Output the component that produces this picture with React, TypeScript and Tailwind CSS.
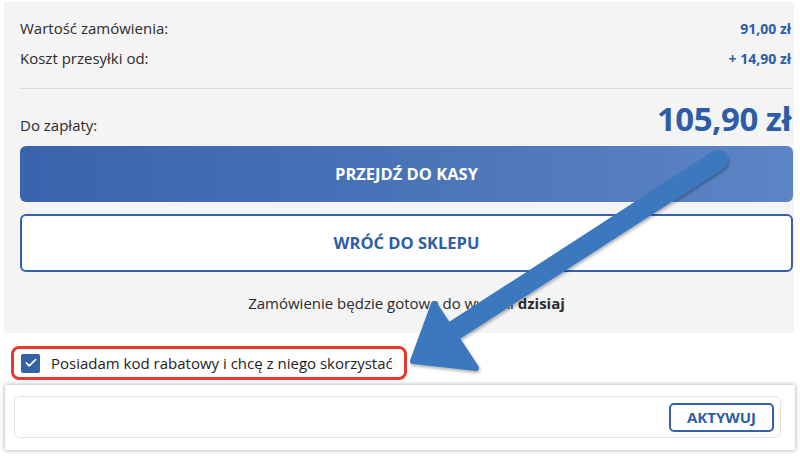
import { Check } from "lucide-react";

export default function App() {
  return (
    <div className="relative w-[800px] h-[457px] overflow-hidden bg-white font-['Open_Sans',sans-serif] text-[#2b2b2b]">
      <div className="ml-1 mr-[6px] mt-0.5 bg-[#f4f4f4] pl-4 pr-px pt-4 pb-5">
        <div className="flex h-5 items-center justify-between text-[15px]">
          <span>Wartość zamówienia:</span>
          <span className="pr-0.5 text-[14px] font-bold text-[#2f5da6]">91,00 zł</span>
        </div>
        <div className="mt-2.5 flex h-5 items-center justify-between text-[15px]">
          <span>Koszt przesyłki od:</span>
          <span className="pr-0.5 text-[14px] font-bold text-[#2f5da6]">+ 14,90 zł</span>
        </div>
        <div className="mt-5 border-t border-[#dcdcdc]" />
        <div className="mt-[10px] flex h-10 items-baseline justify-between">
          <span className="text-[15px]">Do zapłaty:</span>
          <span className="pr-0.5 text-[33px] leading-10 font-bold tracking-[-0.5px] text-[#2e5ca6]">105,90 zł</span>
        </div>
        <div className="mt-[7px] flex h-14 items-center justify-center rounded-md bg-gradient-to-r from-[#3963ac] to-[#5b85c4] text-[16.5px] font-bold text-white">
          PRZEJDŹ DO KASY
        </div>
        <div className="mt-3 flex h-[58px] items-center justify-center rounded-md border-2 border-[#3661ad] bg-white text-[16.5px] font-bold text-[#2f5da6]">
          WRÓĆ DO SKLEPU
        </div>
        <div className="mt-[21px] h-5 text-center text-[15px] leading-5">
          Zamówienie będzie gotowe do wysyłki <b>dzisiaj</b>
        </div>
      </div>

      <div className="ml-[11px] mt-[13px] flex h-[34px] w-[396px] items-center gap-[11px] rounded-lg border-[3px] border-[#e53a32] pl-[7px]">
        <span className="flex h-[19px] w-[19px] items-center justify-center rounded-[2px] bg-[#3561a9]">
          <Check className="h-3.5 w-3.5 text-white" strokeWidth={3} />
        </span>
        <span className="text-[15px] text-[#222]">Posiadam kod rabatowy i chcę z niego skorzystać</span>
      </div>

      <div className="ml-[5px] mt-[5px] w-[790px] bg-white pl-[9px] pr-[14px] pt-[11px] pb-3 shadow-[0_0_5px_rgba(0,0,0,0.35)]">
        <div className="flex h-[42px] items-center justify-end rounded-md border border-[#e4e4e4] pr-[6px]">
          <div className="flex h-[29px] w-[105px] items-center justify-center rounded-[5px] border-2 border-[#3661ad] text-[15px] font-bold text-[#2f5da6]">
            AKTYWUJ
          </div>
        </div>
      </div>

      <svg className="pointer-events-none absolute inset-0" width="800" height="457" viewBox="0 0 800 457">
        <defs>
          <filter id="sh" x="-10%" y="-10%" width="120%" height="120%">
            <feDropShadow dx="1" dy="2" stdDeviation="1.5" floodColor="#000" floodOpacity="0.3" />
          </filter>
        </defs>
        <g filter="url(#sh)" fill="#3a78be" stroke="#3a78be">
          <line x1="718" y1="160" x2="452" y2="332" strokeWidth="20" strokeLinecap="round" />
          <polygon points="413,361 434,304 476,368" strokeWidth="6" strokeLinejoin="round" />
        </g>
      </svg>
    </div>
  );
}
